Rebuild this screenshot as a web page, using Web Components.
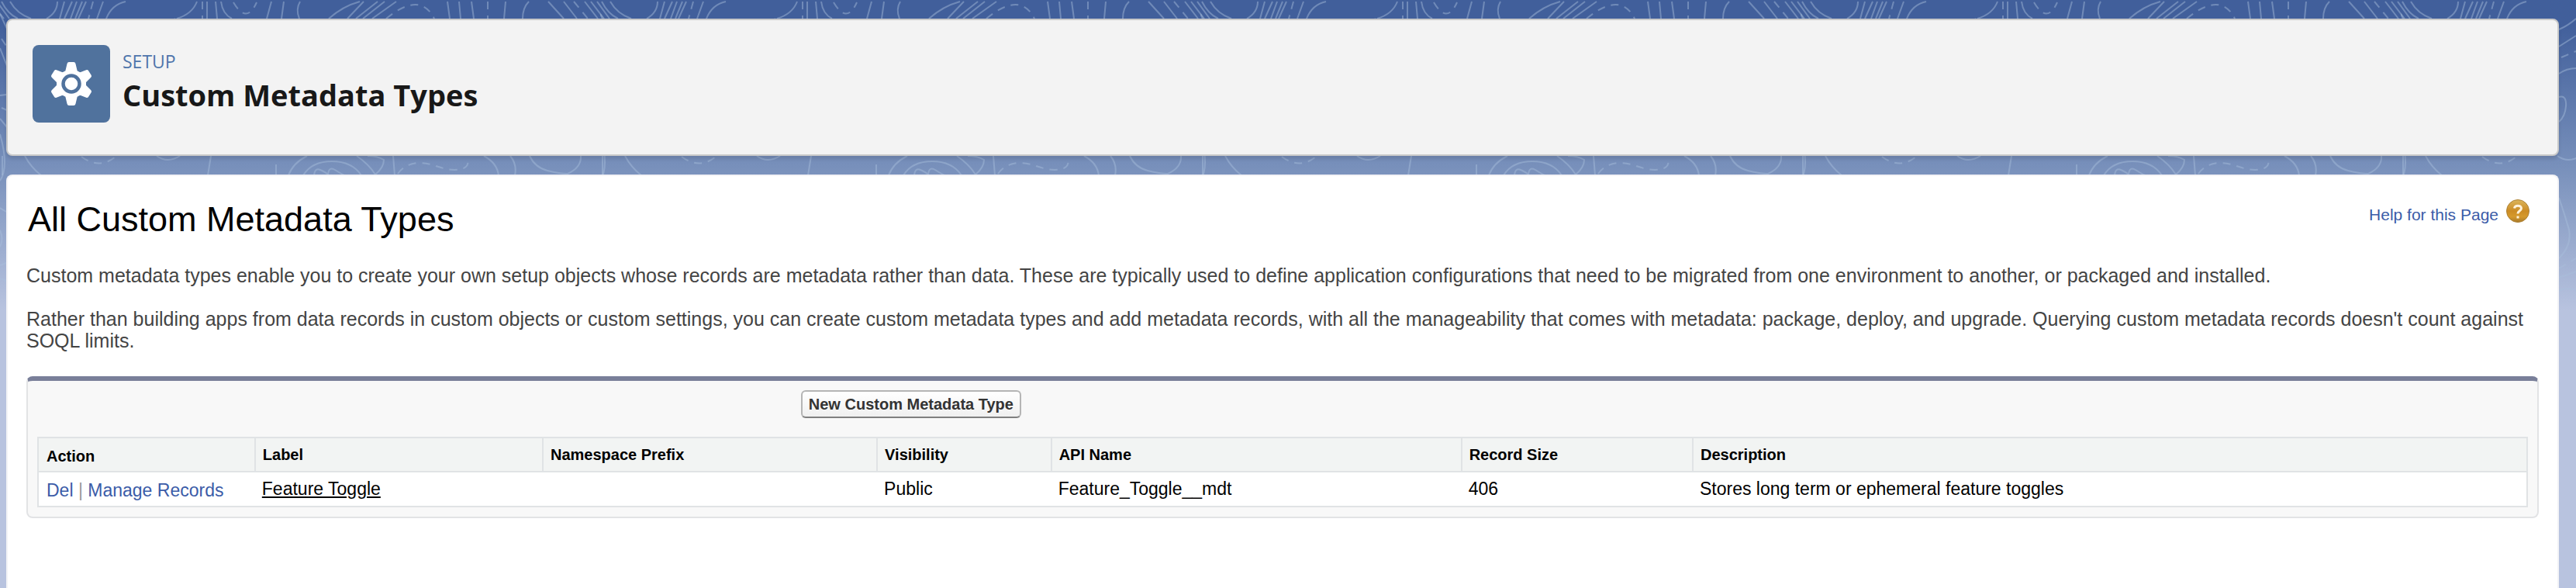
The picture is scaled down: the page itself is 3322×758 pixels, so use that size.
<!DOCTYPE html>
<html lang="en">
<head>
<meta charset="utf-8">
<title>Custom Metadata Types</title>
<style>
  html, body { height: 100%; }
  body { margin: 0; font-family: "Liberation Sans", Arial, sans-serif; background: #b8c3df; }
</style>
</head>
<body>
<setup-page>
  <setup-header eyebrow="SETUP" heading="Custom Metadata Types"></setup-header>
  <content-card>
    <page-title heading="All Custom Metadata Types"></page-title>
    <intro-text>
      <p>Custom metadata types enable you to create your own setup objects whose records are metadata rather than data. These are typically used to define application configurations that need to be migrated from one environment to another, or packaged and installed.</p>
      <p>Rather than building apps from data records in custom objects or custom settings, you can create custom metadata types and add metadata records, with all the manageability that comes with metadata: package, deploy, and upgrade. Querying custom metadata records doesn't count against SOQL limits.</p>
    </intro-text>
    <types-panel></types-panel>
  </content-card>
</setup-page>

<script>
class BaseElement extends HTMLElement {
  constructor() {
    super();
    this.attachShadow({ mode: "open" });
  }
  connectedCallback() {
    this.shadowRoot.innerHTML = this.render();
  }
}

customElements.define("topo-backdrop", class extends BaseElement {
  render() {
    return `
    <style>
      :host { display: block; background: linear-gradient(#415f9b 0, #415f9b 30px, #7890bb 215px, #b8c3df 400px); }
      svg { display: block; width: 100%; height: 400px; }
      path { fill: none; stroke: #a9bedd; stroke-width: 2; stroke-opacity: .45; }
      .dash { stroke-dasharray: 10 8; }
    </style>
    <svg aria-hidden="true">
      <defs>
        <pattern id="topo" width="774" height="400" patternUnits="userSpaceOnUse">
          <path d="M707 2L727 24M727 2L744 24M754 2L771 24M762 2L779 24M770 2L786 24M-12 2L5 24M-4 2L12 24M2 2Q10 18 23 24M13 2Q22 18 40 24"/>
          <path d="M74 2Q74 16 60 24M83 2L77 24M93 2L83 24M99 2L91 24M106 2L97 24M111 2L101 24M133 2L125 24M162 2Q144 6 137 24"/>
          <path d="M254 2Q248 18 228 24M267 2V24M278 2L280 24M285 2Q287 18 299 24M350 2L344 24M366 2L363 24M387 2Q381 12 386 24"/>
          <path d="M464 2Q442 8 424 24M469 2L448 24M487 2L459 24M496 2L468 24M511 2L480 24M577 2L580 24M592 2L594 24M608 2L611 24M652 2L650 24M682 2Q674 10 674 24"/>
          <path class="dash" d="M740 2L758 24M120 2L114 24M261 2V24M301 3Q318 32 331 3M498 24Q542-12 560 24M629 2V24"/>
          <path d="M32 201Q40 216 53 226M202 201Q216 211 232 201M272 201L268 226M356 212V226M372 226Q378 210 396 201M391 226Q402 208 428 208T466 226M405 226Q406 216 413 219T423 225Q424 214 432 219T444 226M460 201Q476 212 484 225M484 225Q495 216 495 206Q487 201 474 201M507 201L509 226M624 201Q641 210 643 226M658 201Q667 212 664 226M683 201Q690 216 706 220T732 224Q750 216 749 201M777 201V226M3 201V226"/>
          <path class="dash" d="M105 202Q128 219 149 202M513 224Q522 211 540 210C560 210 565 218 586 219Q607 219 603 203"/>
          <path d="M204 38Q216 33 226 24M204 60L226 46M204 95Q214 88 226 88M204 125Q214 122 213 137Q212 150 204 157M204 255Q211 275 217 296C220 312 212 325 204 333M204 358L226 350M204 375Q215 369 226 374"/>
          <path d="M0 18L9 37M0 62L9 85M0 123L8 122M2 139L9 142M0 153L9 164M0 173Q12 215 0 233M0 268L8 273M0 297Q5 308 0 318M0 342L8 339M0 359L8 362"/>
          <path class="dash" d="M2 50L8 59M204 346L226 333M207 74L226 66"/>
        </pattern>
      </defs>
      <rect width="100%" height="400" fill="url(#topo)"/>
    </svg>`;
  }
});

customElements.define("setup-page", class extends BaseElement {
  render() {
    return `
    <style>
      :host { display: grid; min-height: 100vh; }
      topo-backdrop, main { grid-area: 1 / 1; }
      main { position: relative; box-sizing: border-box; display: flex; flex-direction: column; gap: 24px; padding: 24px 22px 0 8px; min-width: 0; }
      ::slotted(content-card) { flex: 1; }
    </style>
    <topo-backdrop></topo-backdrop>
    <main><slot></slot></main>`;
  }
});

customElements.define("setup-header", class extends BaseElement {
  render() {
    return `
    <style>
      :host { display: block; }
      header { display: flex; gap: 16px; padding: 32px 32px 41px; background: #f3f3f3; border: 2px solid #c9c9c9; border-radius: 8px; box-shadow: 0 4px 4px rgba(0,0,0,.1); }
      svg { display: block; width: 100px; height: 100px; border-radius: 8px; background: #50729d; }
      .text { padding-top: 6px; font-family: "Open Sans", "Noto Sans", sans-serif; }
      p { margin: 0; font-size: 23px; line-height: 30px; color: #4f75ab; }
      h1 { margin: 0; font-size: 38px; line-height: 56px; font-weight: 700; color: #181818; }
    </style>
    <header>
      <svg viewBox="0 0 100 100" aria-hidden="true">
        <path fill="#fff" stroke="#fff" stroke-width="5" stroke-linejoin="round" d="M47 24.500H53L55.500 35L61 38L70 34.500L73.500 40L66.500 47V53L73.500 60L70 65.500L61 62L55.500 65L53 75.500H47L44.500 65L39 62L30 65.500L26.500 60L33.500 53V47L26.500 40L30 34.500L39 38L44.500 35Z"/>
        <circle cx="50" cy="50" r="10.500" fill="#fff" stroke="#50729d" stroke-width="4.500"/>
      </svg>
      <div class="text">
        <p>${this.getAttribute("eyebrow")}</p>
        <h1>${this.getAttribute("heading")}</h1>
      </div>
    </header>`;
  }
});

customElements.define("content-card", class extends BaseElement {
  render() {
    return `
    <style>
      :host { display: block; box-sizing: border-box; padding: 30px 24px 0; background: #fff; border: 2px solid #f3f3f6; border-bottom: 0; border-radius: 8px 8px 0 0; }
    </style>
    <slot></slot>`;
  }
});

customElements.define("page-title", class extends BaseElement {
  render() {
    return `
    <style>
      :host { display: flex; justify-content: space-between; align-items: flex-start; padding: 0 12px 0 2px; }
      h2 { margin: 0; font-size: 45px; line-height: 52px; font-weight: 400; color: #000; }
      a { display: flex; gap: 10px; font-size: 21px; line-height: 40px; color: #3b5ca8; text-decoration: none; }
      svg { width: 30px; height: 30px; }
    </style>
    <h2>${this.getAttribute("heading")}</h2>
    <a href="#help">Help for this Page
      <svg viewBox="0 0 30 30" aria-hidden="true">
        <defs><linearGradient id="gold" x2="0" y2="1"><stop stop-color="#dbb55c"/><stop offset=".5" stop-color="#cc8c24"/><stop offset=".75" stop-color="#d69a2c"/><stop offset="1" stop-color="#a87a2a"/></linearGradient></defs>
        <circle cx="15" cy="15" r="14.500" fill="url(#gold)" stroke="#ad8236"/>
        <path d="M10.500 11.500C11 7 19.500 7 19.500 11.500C19.500 15 15 14.500 15 18.500M15 21.500V24.500" fill="none" stroke="#fff3dc" stroke-width="3"/>
      </svg>
    </a>`;
  }
});

customElements.define("intro-text", class extends BaseElement {
  render() {
    return `
    <style>
      :host { display: block; padding-top: 32px; font-size: 25px; line-height: 28px; color: #444; }
      ::slotted(p) { margin: 0 0 28px; }
    </style>
    <slot></slot>`;
  }
});

customElements.define("types-panel", class extends BaseElement {
  render() {
    return `
    <style>
      :host { display: block; box-sizing: border-box; padding: 12px 12px; margin-top: 32px; background: #f8f8f8; border: 2px solid #e2e3e5; border-top: 6px solid #797f99; border-radius: 8px; }
      .toolbar { padding-left: 30.660%; }
      button { display: block; box-sizing: border-box; height: 36px; padding: 0 8px; font: bold 20px "Liberation Sans", Arial, sans-serif; color: #333; background: linear-gradient(#fff, #f0f0f0); border: 2px solid #b5b5b5; border-bottom-color: #7f7f7f; border-radius: 6px; }
      table { width: 100%; margin-top: 24px; border-collapse: separate; border-spacing: 0; table-layout: fixed; background: #fff; border: 2px solid #e0e3e5; color: #000; }
      th, td { box-sizing: border-box; text-align: left; padding: 0 10px; white-space: nowrap; }
      th { height: 44px; font-size: 20px; background: #f2f4f3; border-bottom: 2px solid #e0e3e5; }
      th + th { border-left: 2px solid #e0e3e5; padding-left: 9px; }
      td { height: 43px; font-size: 23px; }
      th:first-child, td:first-child { padding-top: 4px; }
      td a { color: #3b5ca8; text-decoration: none; }
      td .name { color: #000; text-decoration: underline; }
      .sep { color: #999; }
    </style>
    <div class="toolbar"><button type="button">New Custom Metadata Type</button></div>
    <table>
      <colgroup>
        <col style="width:8.660%"><col style="width:11.570%"><col style="width:13.440%"><col style="width:7%"><col style="width:16.490%"><col style="width:9.300%"><col>
      </colgroup>
      <thead><tr><th scope="col">Action</th><th scope="col">Label</th><th scope="col">Namespace Prefix</th><th scope="col">Visibility</th><th scope="col">API Name</th><th scope="col">Record Size</th><th scope="col">Description</th></tr></thead>
      <tbody><tr>
        <td><a href="#del">Del</a> <span class="sep">|</span> <a href="#manage">Manage Records</a></td>
        <td><a class="name" href="#feature-toggle">Feature Toggle</a></td>
        <td></td><td>Public</td><td>Feature_Toggle__mdt</td><td>406</td><td>Stores long term or ephemeral feature toggles</td>
      </tr></tbody>
    </table>`;
  }
});
</script>
</body>
</html>
